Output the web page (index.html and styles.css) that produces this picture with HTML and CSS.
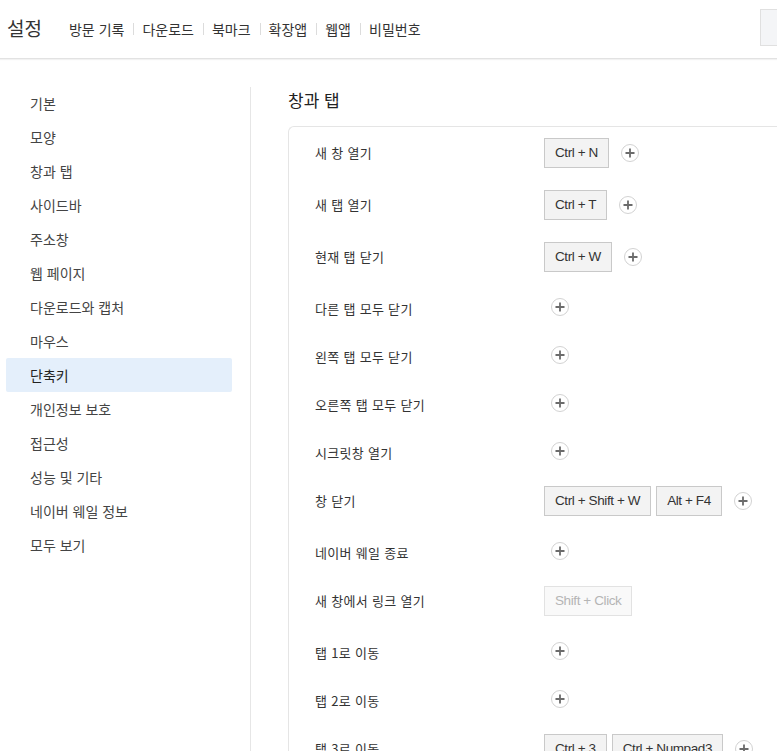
FILE: index.html
```html
<!DOCTYPE html>
<html lang="ko">
<head>
<meta charset="utf-8">
<title>설정</title>
<link rel="stylesheet" href="styles.css">
</head>
<body>
<div class="page">
  <header class="topbar">
    <h1 class="title">설정</h1>
    <nav class="topnav">
      <a class="navlink">방문 기록</a><span class="sep"></span>
      <a class="navlink">다운로드</a><span class="sep"></span>
      <a class="navlink">북마크</a><span class="sep"></span>
      <a class="navlink">확장앱</a><span class="sep"></span>
      <a class="navlink">웹앱</a><span class="sep"></span>
      <a class="navlink">비밀번호</a>
    </nav>
    <div class="search"></div>
  </header>
  <div class="main">
    <aside class="sidebar">
      <div class="side-item">기본</div>
      <div class="side-item">모양</div>
      <div class="side-item">창과 탭</div>
      <div class="side-item">사이드바</div>
      <div class="side-item">주소창</div>
      <div class="side-item">웹 페이지</div>
      <div class="side-item">다운로드와 캡처</div>
      <div class="side-item">마우스</div>
      <div class="side-item active">단축키</div>
      <div class="side-item">개인정보 보호</div>
      <div class="side-item">접근성</div>
      <div class="side-item">성능 및 기타</div>
      <div class="side-item">네이버 웨일 정보</div>
      <div class="side-item">모두 보기</div>
    </aside>
    <section class="content">
      <h2 class="section-title">창과 탭</h2>
      <div class="card">
        <div class="row"><div class="label">새 창 열기</div><div class="actions"><span class="key">Ctrl + N</span><span class="plus"><svg viewBox="0 0 18 18" width="18" height="18"><circle cx="9" cy="9" r="8.5" fill="#fff" stroke="#d2d2d2"/><path d="M9 4.5v9M4.5 9h9" stroke="#6b6b6b" stroke-width="1.8"/></svg></span></div></div>
        <div class="row"><div class="label">새 탭 열기</div><div class="actions"><span class="key">Ctrl + T</span><span class="plus"><svg viewBox="0 0 18 18" width="18" height="18"><circle cx="9" cy="9" r="8.5" fill="#fff" stroke="#d2d2d2"/><path d="M9 4.5v9M4.5 9h9" stroke="#6b6b6b" stroke-width="1.8"/></svg></span></div></div>
        <div class="row"><div class="label">현재 탭 닫기</div><div class="actions"><span class="key">Ctrl + W</span><span class="plus"><svg viewBox="0 0 18 18" width="18" height="18"><circle cx="9" cy="9" r="8.5" fill="#fff" stroke="#d2d2d2"/><path d="M9 4.5v9M4.5 9h9" stroke="#6b6b6b" stroke-width="1.8"/></svg></span></div></div>
        <div class="row nokey"><div class="label">다른 탭 모두 닫기</div><div class="actions"><span class="plus"><svg viewBox="0 0 18 18" width="18" height="18"><circle cx="9" cy="9" r="8.5" fill="#fff" stroke="#d2d2d2"/><path d="M9 4.5v9M4.5 9h9" stroke="#6b6b6b" stroke-width="1.8"/></svg></span></div></div>
        <div class="row nokey"><div class="label">왼쪽 탭 모두 닫기</div><div class="actions"><span class="plus"><svg viewBox="0 0 18 18" width="18" height="18"><circle cx="9" cy="9" r="8.5" fill="#fff" stroke="#d2d2d2"/><path d="M9 4.5v9M4.5 9h9" stroke="#6b6b6b" stroke-width="1.8"/></svg></span></div></div>
        <div class="row nokey"><div class="label">오른쪽 탭 모두 닫기</div><div class="actions"><span class="plus"><svg viewBox="0 0 18 18" width="18" height="18"><circle cx="9" cy="9" r="8.5" fill="#fff" stroke="#d2d2d2"/><path d="M9 4.5v9M4.5 9h9" stroke="#6b6b6b" stroke-width="1.8"/></svg></span></div></div>
        <div class="row nokey"><div class="label">시크릿창 열기</div><div class="actions"><span class="plus"><svg viewBox="0 0 18 18" width="18" height="18"><circle cx="9" cy="9" r="8.5" fill="#fff" stroke="#d2d2d2"/><path d="M9 4.5v9M4.5 9h9" stroke="#6b6b6b" stroke-width="1.8"/></svg></span></div></div>
        <div class="row"><div class="label">창 닫기</div><div class="actions"><span class="key">Ctrl + Shift + W</span><span class="key">Alt + F4</span><span class="plus"><svg viewBox="0 0 18 18" width="18" height="18"><circle cx="9" cy="9" r="8.5" fill="#fff" stroke="#d2d2d2"/><path d="M9 4.5v9M4.5 9h9" stroke="#6b6b6b" stroke-width="1.8"/></svg></span></div></div>
        <div class="row nokey"><div class="label">네이버 웨일 종료</div><div class="actions"><span class="plus"><svg viewBox="0 0 18 18" width="18" height="18"><circle cx="9" cy="9" r="8.5" fill="#fff" stroke="#d2d2d2"/><path d="M9 4.5v9M4.5 9h9" stroke="#6b6b6b" stroke-width="1.8"/></svg></span></div></div>
        <div class="row"><div class="label">새 창에서 링크 열기</div><div class="actions"><span class="key disabled">Shift + Click</span></div></div>
        <div class="row nokey"><div class="label">탭 1로 이동</div><div class="actions"><span class="plus"><svg viewBox="0 0 18 18" width="18" height="18"><circle cx="9" cy="9" r="8.5" fill="#fff" stroke="#d2d2d2"/><path d="M9 4.5v9M4.5 9h9" stroke="#6b6b6b" stroke-width="1.8"/></svg></span></div></div>
        <div class="row nokey"><div class="label">탭 2로 이동</div><div class="actions"><span class="plus"><svg viewBox="0 0 18 18" width="18" height="18"><circle cx="9" cy="9" r="8.5" fill="#fff" stroke="#d2d2d2"/><path d="M9 4.5v9M4.5 9h9" stroke="#6b6b6b" stroke-width="1.8"/></svg></span></div></div>
        <div class="row"><div class="label">탭 3로 이동</div><div class="actions"><span class="key">Ctrl + 3</span><span class="key">Ctrl + Numpad3</span><span class="plus"><svg viewBox="0 0 18 18" width="18" height="18"><circle cx="9" cy="9" r="8.5" fill="#fff" stroke="#d2d2d2"/><path d="M9 4.5v9M4.5 9h9" stroke="#6b6b6b" stroke-width="1.8"/></svg></span></div></div>
      </div>
    </section>
  </div>
</div>
</body>
</html>
```

FILE: styles.css
```css
html, body {
  margin: 0;
  padding: 0;
  overflow: hidden;
  background: #fff;
}

body {
  font-family: "Noto Sans CJK KR", "Liberation Sans", sans-serif;
  color: #333;
  font-size: 13px;
}

.page {
  width: 1200px;
}

.topbar {
  display: flex;
  align-items: center;
  height: 58px;
  padding: 0 238px 0 7px;
  border-bottom: 1px solid #e2e2e2;
  box-shadow: 0 1px 1px rgba(0, 0, 0, 0.05);
}

.title {
  margin: 0;
  font-size: 19px;
  font-weight: normal;
  color: #333;
  line-height: 28px;
  margin-top: -2px;
}

.topnav {
  display: flex;
  align-items: center;
  flex: 1;
  margin-left: 27px;
}

.navlink {
  font-size: 14px;
  line-height: 20px;
  color: #333;
}

.sep {
  width: 1px;
  height: 12px;
  background: #dcdcdc;
  margin: 0 8px 0 9px;
}

.search {
  width: 200px;
  height: 35px;
  margin-top: -3px;
  background: #f4f5f7;
  border: 1px solid #e0e0e0;
}

.main {
  display: flex;
  padding-top: 28px;
}

.sidebar {
  flex-shrink: 0;
  width: 244px;
  padding-left: 6px;
  border-right: 1px solid #e6e6e6;
  min-height: 700px;
}

.side-item {
  width: 202px;
  height: 34px;
  line-height: 34px;
  padding-left: 24px;
  color: #444;
  font-size: 14px;
  border-radius: 2px;
}

.side-item:first-child {
  margin-top: -1px;
}

.side-item.active {
  background: #e4effb;
  color: #222;
}

.content {
  flex-shrink: 0;
  margin-left: 37px;
}

.section-title {
  margin: 0 0 13px;
  font-size: 17px;
  font-weight: normal;
  line-height: 26px;
  color: #222;
}

.card {
  width: 700px;
  padding-left: 26px;
  border: 1px solid #e5e5e5;
  border-radius: 6px 0 0 0;
  border-right: none;
}

.row {
  display: flex;
  align-items: flex-start;
  padding: 11px 0;
}

.row.nokey {
  padding-bottom: 7px;
}

.label {
  width: 229px;
  flex-shrink: 0;
  line-height: 30px;
  color: #333;
  font-size: 13px;
  letter-spacing: 0.3px;
}

.actions {
  display: flex;
  align-items: center;
  height: 30px;
}

.key {
  display: inline-block;
  height: 28px;
  line-height: 28px;
  padding: 0 10px;
  margin-right: 5px;
  background: #f3f3f3;
  border: 1px solid #c9c9c9;
  font-family: "Liberation Sans", Arial, sans-serif;
  font-size: 13.5px;
  color: #333;
  letter-spacing: -0.4px;
}

.key.disabled {
  color: #b5b5b5;
  background: #f9f9f9;
  border-color: #e2e2e2;
}

.plus {
  display: inline-flex;
  width: 18px;
  height: 18px;
  margin-left: 7px;
}

.nokey .plus {
  margin-bottom: 4px;
}

.plus svg {
  display: block;
}
```
